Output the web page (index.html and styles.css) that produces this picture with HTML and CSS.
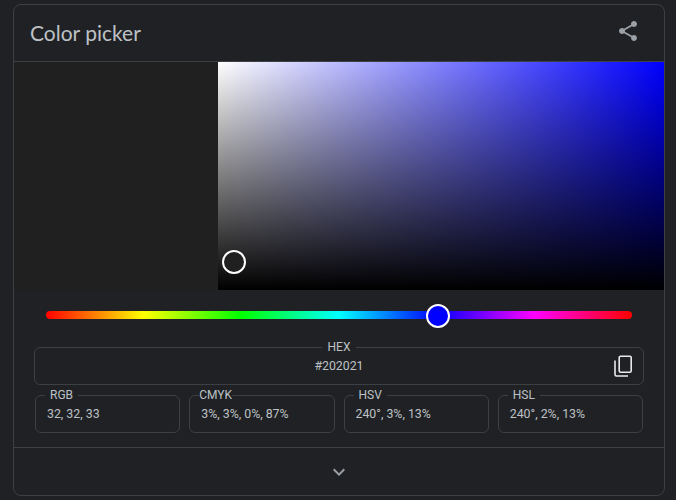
FILE: index.html
```html
<!DOCTYPE html>
<html lang="en">
<head>
<meta charset="utf-8">
<title>Color picker</title>
<link rel="stylesheet" href="styles.css">
</head>
<body>
<main class="card">
  <header class="card-header">
    <h1 class="card-title">Color picker</h1>
    <svg class="share-icon" viewBox="0 0 24 24" width="24" height="24" aria-label="Share"><path d="M18 16.08c-.76 0-1.44.3-1.96.77L8.91 12.7c.05-.23.09-.46.09-.7s-.04-.47-.09-.7l7.05-4.11c.54.5 1.25.81 2.04.81 1.66 0 3-1.34 3-3s-1.34-3-3-3-3 1.34-3 3c0 .24.04.47.09.7L8.04 9.81C7.5 9.31 6.79 9 6 9c-1.66 0-3 1.34-3 3s1.34 3 3 3c.79 0 1.5-.31 2.04-.81l7.12 4.16c-.05.21-.08.43-.08.65 0 1.61 1.31 2.92 2.92 2.92s2.92-1.31 2.92-2.92-1.31-2.92-2.92-2.92z"/></svg>
  </header>
  <section class="canvas-row">
    <div class="swatch"></div>
    <div class="saturation">
      <span class="sat-cursor"></span>
    </div>
  </section>
  <div class="hue-wrap">
    <div class="hue-track">
      <span class="hue-thumb"></span>
    </div>
  </div>
  <fieldset class="field field-hex">
    <legend class="field-label">HEX</legend>
    <span class="hex-value">#202021</span>
    <svg class="copy-icon" viewBox="0 0 24 24" width="24" height="24" aria-label="Copy"><rect x="8.2" y="2.2" width="12" height="16" rx="1.4"/><path d="M4 6.5v14a1.5 1.5 0 0 0 1.5 1.5H17"/></svg>
  </fieldset>
  <div class="field-row">
    <fieldset class="field field-small">
      <legend class="field-label label-rgb">RGB</legend>
      <span class="value value-rgb">32, 32, 33</span>
    </fieldset>
    <fieldset class="field field-small">
      <legend class="field-label label-cmyk">CMYK</legend>
      <span class="value value-cmyk">3%, 3%, 0%, 87%</span>
    </fieldset>
    <fieldset class="field field-small">
      <legend class="field-label label-rgb">HSV</legend>
      <span class="value value-rgb">240°, 3%, 13%</span>
    </fieldset>
    <fieldset class="field field-small">
      <legend class="field-label label-rgb">HSL</legend>
      <span class="value value-rgb">240°, 2%, 13%</span>
    </fieldset>
  </div>
  <footer class="card-footer">
    <svg class="chevron" viewBox="0 0 24 24" width="24" height="24" aria-label="Expand"><path d="M7.41 8.59 12 13.17l4.59-4.58L18 10l-6 6-6-6z"/></svg>
  </footer>
</main>
</body>
</html>
```
FILE: styles.css
```css
* {
  box-sizing: border-box;
}
html, body {
  margin: 0;
  padding: 0;
  height: 100%;
  overflow: hidden;
  background: #202124;
}
body {
  padding: 4px 11px 0 13px;
  font-family: Roboto, "Liberation Sans", sans-serif;
  color: #bdc1c6;
}
.card {
  width: 652px;
  height: 492px;
  border: 1px solid #3c4043;
  border-radius: 8px;
  display: flex;
  flex-direction: column;
}
.card-header {
  height: 57px;
  flex: none;
  display: flex;
  align-items: center;
  justify-content: space-between;
  padding: 0 24px 0 16px;
  border-bottom: 1px solid #3c4043;
}
.card-title {
  margin: -2px 0 0;
  font-family: Lato, Roboto, sans-serif;
  font-size: 21px;
  font-weight: 400;
  color: #bdc1c6;
}
.share-icon {
  fill: #9aa0a6;
  margin-top: -4px;
}
.canvas-row {
  height: 228px;
  flex: none;
  display: flex;
}
.swatch {
  width: 204px;
  background: #202021;
}
.saturation {
  flex: 1;
  position: relative;
  background:
    linear-gradient(to top, #000, rgba(0, 0, 0, 0)),
    linear-gradient(to right, #fff, #0000ff);
}
.sat-cursor {
  position: absolute;
  left: 4px;
  top: 188px;
  width: 24px;
  height: 24px;
  border: 2px solid #fff;
  border-radius: 50%;
  background: #202021;
}
.hue-wrap {
  padding: 21px 32px 0;
  flex: none;
}
.hue-track {
  position: relative;
  height: 8px;
  border-radius: 4px;
  background: linear-gradient(to right, #f00, #ff0 16.67%, #0f0 33.33%, #0ff 50%, #00f 66.67%, #f0f 83.33%, #f00);
}
.hue-thumb {
  position: absolute;
  left: 380px;
  top: -7px;
  width: 24px;
  height: 24px;
  border: 2px solid #fff;
  border-radius: 50%;
  background: #00f;
}
.field {
  margin: 0;
  padding: 0;
  min-width: 0;
  border: 1px solid #3c4043;
  border-radius: 6px;
}
.field-label {
  font-size: 12px;
  line-height: 14px;
  color: #bdc1c6;
}
.field-hex {
  position: relative;
  flex: none;
  height: 45px;
  margin: 21px 20px 0;
  text-align: center;
}
.field-hex .field-label {
  padding: 0 6px;
  margin: 0 auto;
}
.hex-value {
  display: block;
  font-size: 12.3px;
  line-height: 14px;
  margin-top: 5px;
}
.copy-icon {
  position: absolute;
  right: 8px;
  top: 0;
  fill: none;
  stroke: #e8eaed;
  stroke-width: 1.6;
}
.field-row {
  flex: none;
  display: flex;
  gap: 9px;
  margin: 3px 21px 0;
}
.field-small {
  flex: 1;
  height: 45px;
}
.label-rgb {
  margin-left: 9px;
  padding: 0 5px;
}
.label-cmyk {
  margin-left: 9px;
  padding: 0;
}
.value {
  display: block;
  font-size: 12.35px;
  line-height: 14px;
  margin-top: 5px;
}
.value-rgb {
  padding-left: 11px;
}
.value-cmyk {
  padding-left: 11px;
}
.card-footer {
  flex: 1;
  margin-top: 14px;
  border-top: 1px solid #3c4043;
  display: flex;
  align-items: center;
  justify-content: center;
}
.chevron {
  fill: #9aa0a6;
}
```
